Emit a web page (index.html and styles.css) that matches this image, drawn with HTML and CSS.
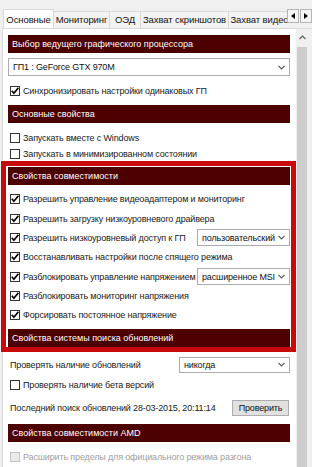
FILE: index.html
```html
<!DOCTYPE html>
<html lang="ru">
<head>
<meta charset="utf-8">
<link rel="stylesheet" href="styles.css">
</head>
<body>
<div class="window">
  <div class="tabbar">
    <div class="tabs">
      <div class="tab active t1">Основные</div>
      <div class="tab t2">Мониторинг</div>
      <div class="tab t3">ОЭД</div>
      <div class="tab t4">Захват скриншотов</div>
      <div class="tab t5">Захват видео</div>
    </div>
    <div class="tab-arrows">
      <div class="arrow-btn"><svg width="4" height="6" viewBox="0 0 4 6"><path d="M4 0 L0 3 L4 6 Z" fill="#000"/></svg></div>
      <div class="arrow-btn"><svg width="4" height="6" viewBox="0 0 4 6"><path d="M0 0 L4 3 L0 6 Z" fill="#000"/></svg></div>
    </div>
  </div>
  <div class="panel">
    <div class="content">
      <div class="header h1">Выбор ведущего графического процессора</div>
      <div class="select wide m5">
        <span>ГП1 : GeForce GTX 970M</span>
        <svg class="chev" width="7" height="5" viewBox="0 0 7 5"><path d="M0.5 0.8 L3.5 3.8 L6.5 0.8" stroke="#555" stroke-width="1.2" fill="none"/></svg>
      </div>
      <div class="row r-sync">
        <span class="cb on"><svg viewBox="0 0 10 10"><path d="M1.8 4.8 L3.9 7.2 L8.4 1.8" stroke="#000" stroke-width="1.7" fill="none"/></svg></span>
        <span>Синхронизировать настройки одинаковых ГП</span>
      </div>
      <div class="header m5">Основные свойства</div>
      <div class="row r-a">
        <span class="cb"></span>
        <span>Запускать вместе с Windows</span>
      </div>
      <div class="row r-b">
        <span class="cb"></span>
        <span>Запускать в минимизированном состоянии</span>
      </div>

      <div class="highlight">
        <div class="header">Свойства совместимости</div>
        <div class="frows">
          <div class="row fr">
            <span class="cb on"><svg viewBox="0 0 10 10"><path d="M1.8 4.8 L3.9 7.2 L8.4 1.8" stroke="#000" stroke-width="1.7" fill="none"/></svg></span>
            <span>Разрешить управление видеоадаптером и мониторинг</span>
          </div>
          <div class="row fr">
            <span class="cb on"><svg viewBox="0 0 10 10"><path d="M1.8 4.8 L3.9 7.2 L8.4 1.8" stroke="#000" stroke-width="1.7" fill="none"/></svg></span>
            <span>Разрешить загрузку низкоуровневого драйвера</span>
          </div>
          <div class="row fr">
            <span class="cb on"><svg viewBox="0 0 10 10"><path d="M1.8 4.8 L3.9 7.2 L8.4 1.8" stroke="#000" stroke-width="1.7" fill="none"/></svg></span>
            <span>Разрешить низкоуровневый доступ к ГП</span>
            <div class="select small">
              <span>пользовательский</span>
              <svg class="chev" width="7" height="5" viewBox="0 0 7 5"><path d="M0.5 0.8 L3.5 3.8 L6.5 0.8" stroke="#555" stroke-width="1.2" fill="none"/></svg>
            </div>
          </div>
          <div class="row fr">
            <span class="cb on"><svg viewBox="0 0 10 10"><path d="M1.8 4.8 L3.9 7.2 L8.4 1.8" stroke="#000" stroke-width="1.7" fill="none"/></svg></span>
            <span>Восстанавливать настройки после спящего режима</span>
          </div>
          <div class="row fr">
            <span class="cb on"><svg viewBox="0 0 10 10"><path d="M1.8 4.8 L3.9 7.2 L8.4 1.8" stroke="#000" stroke-width="1.7" fill="none"/></svg></span>
            <span>Разблокировать управление напряжением</span>
            <div class="select small">
              <span>расширенное MSI</span>
              <svg class="chev" width="7" height="5" viewBox="0 0 7 5"><path d="M0.5 0.8 L3.5 3.8 L6.5 0.8" stroke="#555" stroke-width="1.2" fill="none"/></svg>
            </div>
          </div>
          <div class="row fr">
            <span class="cb on"><svg viewBox="0 0 10 10"><path d="M1.8 4.8 L3.9 7.2 L8.4 1.8" stroke="#000" stroke-width="1.7" fill="none"/></svg></span>
            <span>Разблокировать мониторинг напряжения</span>
          </div>
          <div class="row fr">
            <span class="cb on"><svg viewBox="0 0 10 10"><path d="M1.8 4.8 L3.9 7.2 L8.4 1.8" stroke="#000" stroke-width="1.7" fill="none"/></svg></span>
            <span>Форсировать постоянное напряжение</span>
          </div>
        </div>
        <div class="header h4">Свойства системы поиска обновлений</div>
      </div>

      <div class="row r-upd">
        <span class="plain">Проверять наличие обновлений</span>
        <div class="select never">
          <span>никогда</span>
          <svg class="chev" width="7" height="5" viewBox="0 0 7 5"><path d="M0.5 0.8 L3.5 3.8 L6.5 0.8" stroke="#555" stroke-width="1.2" fill="none"/></svg>
        </div>
      </div>
      <div class="row r-beta">
        <span class="cb"></span>
        <span>Проверять наличие бета версий</span>
      </div>
      <div class="row r-last">
        <span class="plain">Последний поиск обновлений 28-03-2015, 20:11:14</span>
        <div class="button">Проверить</div>
      </div>
      <div class="header h-amd">Свойства совместимости AMD</div>
      <div class="row r-dis disabled">
        <span class="cb"></span>
        <span>Расширить пределы для официального режима разгона</span>
      </div>
    </div>
    <div class="scrollbar">
      <div class="sb-up"><svg width="7" height="5" viewBox="0 0 7 5"><path d="M0.5 4 L3.5 1 L6.5 4" stroke="#606060" stroke-width="1.2" fill="none"/></svg></div>
      <div class="sb-thumb"></div>
    </div>
  </div>
</div>
</body>
</html>
```

FILE: styles.css
```css
* { box-sizing: border-box; }
html, body { margin: 0; padding: 0; }
body {
  background: #f0f0f0;
  font-family: "Liberation Sans", Arial, sans-serif;
  font-size: 9px;
  letter-spacing: -0.15px;
  color: #1a1a1a;
  width: 312px;
  height: 467px;
  overflow: hidden;
}
.window { display: flex; flex-direction: column; height: 467px; }

.tabbar { display: flex; height: 28px; padding-left: 3px; align-items: flex-end; }
.tabs { display: flex; flex: 1; overflow: hidden; align-items: flex-end; height: 28px; }
.tab {
  flex: none;
  height: 17px;
  line-height: 15px;
  border: 1px solid #d9d9d9;
  border-bottom: none;
  border-left: none;
  background: #f3f3f3;
  white-space: nowrap;
  color: #111;
  text-align: center;
  font-size: 9.5px;
  letter-spacing: -0.1px;
}
.t1 { width: 51px; }
.t2 { width: 56px; }
.t3 { width: 31px; }
.t4 { width: 88px; }
.t5 { width: 62px; }
.tab.active {
  height: 20px;
  line-height: 19px;
  background: #fff;
  border-left: 1px solid #d9d9d9;
  margin-bottom: -1px;
  position: relative;
  z-index: 1;
}
.tab-arrows { display: flex; gap: 1px; align-self: flex-start; margin-top: 9px; flex: none; }
.arrow-btn {
  width: 12px; height: 14px;
  border: 1px solid #b5b5b5;
  background: #f4f4f4;
  display: flex; align-items: center; justify-content: center;
}

.panel {
  flex: 1;
  display: flex;
  margin-left: 2px;
  border-top: 1px solid #d9d9d9;
  border-left: 1px solid #d9d9d9;
  background: #fff;
  min-height: 0;
}
.content {
  width: 293px;
  flex: none;
  padding: 6px 6px 0 5px;
  display: flex;
  flex-direction: column;
}
.scrollbar {
  flex: 1;
  background: #f0f0f0;
  display: flex;
  flex-direction: column;
  align-items: flex-start;
}
.sb-up { width: 11px; height: 17px; display: flex; align-items: center; justify-content: center; margin-left: 1px; }
.sb-thumb { flex: 1; width: 10px; margin: 1px 0 0 1px; background: #cdcdcd; }

.header {
  height: 18px;
  background: #4c0000;
  color: #fff;
  display: flex;
  align-items: center;
  padding-left: 4px;
  flex: none;
  letter-spacing: 0;
}
.m5 { margin-top: 5px; }
.header.h4 { margin-top: 4px; }
.header.h-amd { margin-top: 8px; }

.select {
  height: 18px;
  border: 1px solid #acacac;
  background: #fff;
  display: flex;
  align-items: center;
  justify-content: space-between;
  padding: 0 4px 0 4px;
  flex: none;
  color: #111;
}
.select.small { width: 93px; height: 17px; margin-left: auto; }
.select.never { width: 111px; height: 16px; margin-left: auto; }
.chev { flex: none; }

.row { display: flex; align-items: center; flex: none; white-space: nowrap; }
.r-sync { height: 18px; margin-top: 6px; }
.r-a { height: 17px; margin-top: 6px; }
.r-b { height: 15px; }
.frows { display: flex; flex-direction: column; margin-top: 4.7px; }
.fr { height: 19.3px; }
.r-upd { height: 16px; margin-top: 5px; }
.r-beta { height: 18px; margin-top: 3px; }
.r-last { height: 16px; margin-top: 6px; }
.r-dis { height: 18px; margin-top: 6px; }

.cb {
  width: 10px; height: 10px;
  border: 1px solid #333;
  background: #fff;
  margin: 0 3px 0 2px;
  flex: none;
  display: flex;
}
.cb svg { width: 10px; height: 10px; margin: -1px; overflow: visible; }
.plain { margin-left: 2px; }

.highlight {
  margin: 0 -6px 0 -7px;
  border: 5px solid #c80a0a;
  padding: 1px 1px 0 2px;
  display: flex;
  flex-direction: column;
}

.button {
  margin-left: auto;
  margin-right: 1px;
  width: 57px;
  height: 16px;
  border: 1px solid #adadad;
  background: #e1e1e1;
  display: flex;
  align-items: center;
  justify-content: center;
  color: #111;
}
.disabled { color: #a0a0a0; }
.disabled .cb { border-color: #c2c2c2; background: #eaeaea; }
```
